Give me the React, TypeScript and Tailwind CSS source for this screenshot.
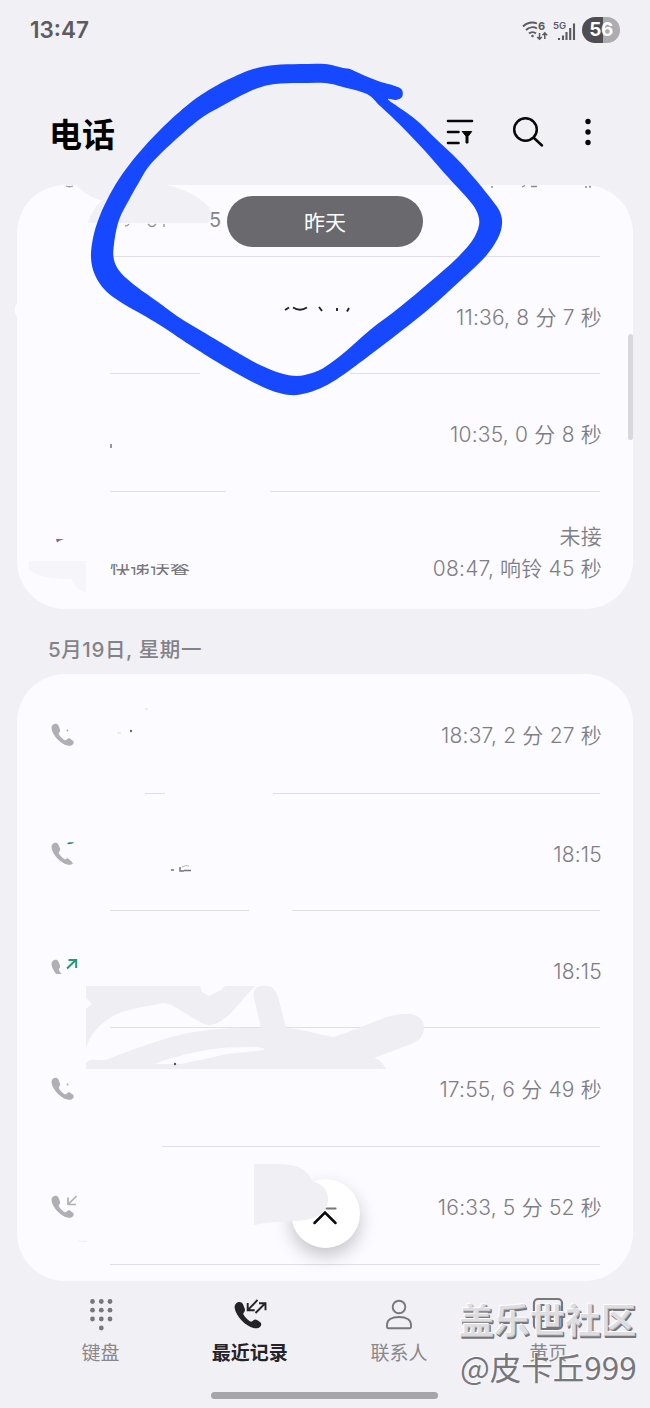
import type { ReactNode } from "react";

type Call = {
  lines: string[];
  height: string;
  segments: [number, number][];
  icon?: ReactNode;
};

type Point = [number, number];

const HANDSET =
  "M3.2 1.1C1.2 2 .2 3.7.6 6.1c.5 3 2.7 7 5.8 10.200 3 3.100 6.700 5.600 9.800 6.300 3 .6 5.400-.2 6.300-2.200.5-1.200.1-2.200-.8-2.900l-2.500-1.700c-1-.7-2.100-.6-3 .2l-1 .9c-.6.5-1.300.5-2 0-2.200-1.500-4-3.400-5.200-5.400-.4-.7-.3-1.300.2-1.900l.5-.7c.6-.9.6-1.800.1-2.800L7.400 2.600C6.600 1 4.900.4 3.200 1.100Z";

function CallIcon({ arrow, cut }: { arrow?: "in" | "out" | "trace" | "dot"; cut?: "low" | "tip" }) {
  return (
    <svg width="28" height="26" viewBox="0 0 28 26" fill="none">
      <path d={HANDSET} fill="#b0afb4" />
      {cut === "low" && <path d="M11 11v4H4v11h22V11Z" fill="#fcfbff" />}
      {cut === "tip" && <path d="m17.500 14 7 2v4.500l-3 .5c-1-2-3-3.500-5-4.500Z" fill="#fcfbff" />}
      {arrow === "in" && <path d="M25.500 1 17 9.500M17 2.500v7h8" stroke="#b0afb4" strokeWidth="1.700" />}
      {arrow === "out" && <path d="M16 9.500 25 .8M17.500 1H25.200v8" stroke="#259a77" strokeWidth="2" />}
      {arrow === "trace" && <path d="M16 1.500 18 .2h5l-1.500 1.300-4 .7Z" fill="#26866c" />}
      {arrow === "dot" && <circle cx="16.500" cy="7.500" r=".9" fill="#a5a4b2" />}
    </svg>
  );
}

const yesterday: Call[] = [
  { lines: [], height: "h-[72px]", segments: [[110, 600]] },
  { lines: ["11:36, 8 分 7 秒"], height: "h-[117px]", segments: [[110, 200], [350, 600]] },
  { lines: ["10:35, 0 分 8 秒"], height: "h-[118px]", segments: [[110, 226], [270, 600]] },
  { lines: ["未接", "08:47, 响铃 45 秒"], height: "h-[117px]", segments: [] },
];

const monday: Call[] = [
  { lines: ["18:37, 2 分 27 秒"], height: "h-[120px]", segments: [[145, 165], [273, 600]], icon: <CallIcon arrow="dot" /> },
  { lines: ["18:15"], height: "h-[117px]", segments: [[110, 249], [292, 600]], icon: <CallIcon arrow="trace" cut="tip" /> },
  { lines: ["18:15"], height: "h-[117px]", segments: [[110, 600]], icon: <CallIcon arrow="out" cut="low" /> },
  { lines: ["17:55, 6 分 49 秒"], height: "h-[119px]", segments: [[162, 600]], icon: <CallIcon arrow="dot" /> },
  { lines: ["16:33, 5 分 52 秒"], height: "h-[118px]", segments: [[110, 600]], icon: <CallIcon arrow="in" /> },
];

function CallRow({ call }: { call: Call }) {
  return (
    <div className={`relative flex items-center pr-[31px] pl-[34px] ${call.height}`}>
      <div className="w-7 pt-1">{call.icon}</div>
      <div className="ml-auto pt-[4px] text-right text-[21px] leading-8 font-[350] tracking-[0.2px] text-[#7f7e83]">
        {call.lines.map((line) => (
          <p key={line}>{line}</p>
        ))}
      </div>
      {call.segments.map(([from, to]) => (
        <span
          key={from}
          className="absolute bottom-0 h-px bg-[#e0dfe4]"
          style={{ left: from - 17, width: to - from }}
        />
      ))}
    </div>
  );
}

function StatusBar() {
  return (
    <div className="flex h-[60px] items-center justify-between px-[30px]">
      <span className="text-[22.500px] font-semibold text-[#5c5b60]">13:47</span>
      <div className="flex items-center">
        <svg width="56" height="24" viewBox="0 0 56 24" fill="none">
          <g stroke="#5b5a5f" strokeWidth="1.900">
            <path d="M1 8.500C4.500 4.500 10.500 3.500 15 5.500M4 12c3-3 7.500-3.500 11-1.500M7 15.500c2-1.800 5-1.800 7 0" />
            <path d="M17.500 15v6M15.200 19l2.300 2.300 2.300-2.300M22.800 21v-6M20.500 17.200l2.300-2.400 2.300 2.400" strokeWidth="1.500" />
          </g>
          <circle cx="10.500" cy="18" r="1.300" fill="#5b5a5f" />
          <text x="16" y="11.500" fontSize="11" fontWeight="700" fill="#5b5a5f">6</text>
          <text x="31" y="10.500" fontSize="9.500" fontWeight="600" fill="#5b5a5f">5G</text>
          <path d="M37 20v2M41 17.500V22M44.500 14v8M48.200 10v12M52 5.500V22" stroke="#5b5a5f" strokeWidth="2.100" />
        </svg>
        <div className="ml-[4px] flex h-[26px] w-[38px] items-center justify-center rounded-full bg-linear-to-r from-[#4e4d52] from-55% to-[#adacb1] to-55% text-[19px] font-bold tracking-[-0.5px] text-white">
          56
        </div>
      </div>
    </div>
  );
}

function Header() {
  return (
    <div className="flex h-[125px] items-start pt-[52px] pr-[55px] pl-[49px]">
      <h1 className="pt-[2px] text-[33px] leading-[42px] font-bold text-black">电话</h1>
      <div className="ml-auto flex items-center pt-[3px]">
        <svg width="30" height="32" viewBox="0 0 30 32" fill="none" stroke="#080808" strokeWidth="2.600" strokeLinecap="round">
          <path d="M3 5h24M3 16h10.500M3 27h10.500" />
          <path d="M17.500 15.500h9.200L23 20.500V27h-2v-6.500Z" fill="#080808" stroke="#080808" strokeWidth="1" strokeLinejoin="round" />
        </svg>
        <svg className="ml-[35px]" width="34" height="34" viewBox="0 0 34 34" fill="none" stroke="#080808" strokeWidth="2.500" strokeLinecap="round">
          <circle cx="15.500" cy="14.500" r="11.300" />
          <path d="m24 23 8 7.500" />
        </svg>
        <svg className="ml-[37px]" width="14" height="30" viewBox="0 0 14 30" fill="#080808">
          <circle cx="7" cy="4.500" r="2.700" />
          <circle cx="7" cy="15" r="2.700" />
          <circle cx="7" cy="25.500" r="2.700" />
        </svg>
      </div>
    </div>
  );
}

function KeypadIcon() {
  const dots: Point[] = [
    [6.5, 5.5], [15.3, 5.5], [24, 5.5],
    [6.5, 14.2], [15.3, 14.2], [24, 14.2],
    [6.5, 23], [15.3, 23], [24, 23],
    [15.3, 32],
  ];
  return (
    <svg width="30" height="36" viewBox="0 0 30 36" fill="#78777c">
      {dots.map(([x, y]) => (
        <circle key={`${x}-${y}`} cx={x} cy={y} r="2.400" />
      ))}
    </svg>
  );
}

function RecentsIcon() {
  return (
    <svg width="34" height="36" viewBox="0 0 34 36" fill="none">
      <g transform="translate(1 5) scale(1.200)">
        <path d={HANDSET} fill="#242328" />
      </g>
      <path d="M24.500 4 15 13.800M14.700 7v7.200h7M22.500 17 32 7.500M26 7.300h6.500v7" stroke="#242328" strokeWidth="1.900" />
    </svg>
  );
}

function ContactIcon() {
  return (
    <svg width="30" height="36" viewBox="0 0 30 36" fill="none" stroke="#78777c" strokeWidth="1.900">
      <circle cx="15" cy="11" r="6.300" />
      <path d="M3 31v-2c0-5 4.500-8 12-8s12 3 12 8v2c0 .8-.4 1.200-1.200 1.200H4.200C3.400 32.200 3 31.800 3 31Z" />
    </svg>
  );
}

function PagesIcon() {
  return (
    <svg width="32" height="36" viewBox="0 0 32 36" fill="none" stroke="#78777c" strokeWidth="2.200">
      <rect x="2" y="3" width="28" height="30" rx="4" />
      <path d="M8 9h10M22 9h3M9 25h14" />
    </svg>
  );
}

function BottomNav() {
  const tabs = [
    { label: "键盘", icon: <KeypadIcon /> },
    { label: "最近记录", icon: <RecentsIcon />, active: true },
    { label: "联系人", icon: <ContactIcon /> },
    { label: "黄页", icon: <PagesIcon /> },
  ];
  return (
    <nav className="grid h-[111px] grid-cols-4 pt-[15px] pr-[27px] pl-[26px]">
      {tabs.map((tab) => (
        <div key={tab.label} className="flex flex-col items-center">
          {tab.icon}
          <span
            className={
              tab.active
                ? "mt-[8px] text-[19px] leading-7 font-bold text-[#242328]"
                : "mt-[8px] text-[19px] leading-7 text-[#88878c]"
            }
          >
            {tab.label}
          </span>
        </div>
      ))}
    </nav>
  );
}

// Eraser strokes and the leftovers of the names below them
function Smudges() {
  return (
    <svg className="pointer-events-none absolute inset-0" width="650" height="1408" viewBox="0 0 650 1408" fill="none">
      <path d="M76 184c5 8 17 14 27 17-8 4-12 13-15 22h117c6 0 8-4 5-15-12-13-26-19-44-23Z" fill="#f1f0f5" />
      <path d="M66 186q3.500 1.500 7 0" stroke="#9a999e" strokeWidth="1.300" />
      <path d="M491 187h2M522 187l3-1.500M531 186.500h6M585 187h2M589 186.500l2 .5" stroke="#8b8a8f" strokeWidth="1.300" />
      <path d="M125 226q3 0 4-2M148 224q4 5 8 0M164 224v3" stroke="#98979c" strokeWidth="1.400" />
      <path d="M17 303c-3 4-3 10 0 14Z" fill="#fcfbff" />
      <path d="m285 310 4-2.500M293 307.500q7 4.500 14 0M319 307l3 4M337 308v3M347 311.500l2-3.500" stroke="#222126" strokeWidth="1.900" />
      <path d="M111 444v4" stroke="#77767b" strokeWidth="1.500" />
      <path d="M56 539h8l-4 1.500-3 2Z" fill="#a3606a" />
      <path d="M29 561h57v31c-6-1-11-5-15-13-17 0-35-2-42-10Z" fill="#f6f5fa" />
      <path d="M117 733h4M145 709h3" stroke="#dedde2" />
      <circle cx="131" cy="731" r="1.200" fill="#69686e" />
      <path d="M171 870h3M180 867v4h4M184 870.500h7" stroke="#77767b" strokeWidth="1.500" />
      <path d="M182 867q4-2.500 7-1" stroke="#b5b4b9" strokeWidth="1" />
      <path
        d="M86 986h114l2 6 7 4 12-6c2-2 3-4 6-4h28c-8 8-15 17-24 27-7 6-13 12-22 12-9-1-15-7-22-11-8-4-14-10-24-11-17 4-35 5-50 13-13 8-22 17-27 31v-38l6-5-6-6Z"
        fill="#efeef3"
      />
      <path
        fillRule="evenodd"
        d="M256 988c4-3 13-3 17 0 4 4 6 12 8 20l5 20c15 1 31 6 47 9 15-4 32-12 46-17 10-4 21-7 31-6 8 1 14 6 14 14s-5 13-13 16l-37 14c5 1 9 5 12 11H86v-6c3-3 5-4 10-3h9c30-11 66-26 103-30 18-2 35-2 53-2l-7-30c-1-4 0-7 2-10ZM154 1064h28l45-10 38-4c-2-3-10-3-20-3-32 0-60 6-91 17Z"
        fill="#efeef3"
      />
      <circle cx="175" cy="1064" r="1.200" fill="#55545a" />
      <path d="M78 1241q5 1 9 0" stroke="#f0eff4" />
    </svg>
  );
}

const penOuter: Point[] = [
  [107, 200], [119, 179], [137, 155], [162, 128], [190, 103], [214, 87], [240, 74], [257, 68], [275, 65],
  [300, 64], [325, 64], [343, 68], [350, 69], [361, 74], [378, 81], [395, 86], [402, 90], [402, 97], [396, 100],
  [388, 99], [394, 104], [415, 119], [436, 139], [458, 160], [475, 179], [492, 200], [500, 212], [502, 224],
  [498, 238], [485, 257], [460, 281], [430, 308], [400, 332], [370, 355], [343, 375], [325, 386], [307, 393],
  [290, 395], [270, 390], [245, 378], [217, 362], [190, 345], [155, 322], [122, 303], [105, 290], [95, 275],
  [91, 258], [93, 238], [99, 218],
];

const penInner: Point[] = [
  [129, 200], [138, 184], [150, 165], [173, 142], [200, 119], [220, 107], [242, 95], [258, 88], [275, 84],
  [300, 83], [325, 83], [343, 87], [367, 94], [379, 105], [392, 117], [408, 133], [425, 151], [447, 176],
  [468, 199], [477, 212], [479, 225], [472, 241], [455, 260], [430, 282], [400, 307], [370, 330], [345, 352],
  [325, 367], [312, 373], [297, 376], [280, 373], [260, 365], [240, 354], [215, 339], [180, 318], [158, 302],
  [137, 287], [121, 273], [114, 260], [114, 244], [119, 220],
];

// Closed Catmull-Rom curve through the points, as cubic segments
function closedCurve(points: Point[]) {
  const n = points.length;
  const at = (i: number) => points[(i + n) % n];
  const parts = points.map((p, i) => {
    const prev = at(i - 1);
    const next = at(i + 1);
    const after = at(i + 2);
    const c1 = [p[0] + (next[0] - prev[0]) / 6, p[1] + (next[1] - prev[1]) / 6];
    const c2 = [next[0] - (after[0] - p[0]) / 6, next[1] - (after[1] - p[1]) / 6];
    return `C${c1.join(" ")} ${c2.join(" ")} ${next.join(" ")}`;
  });
  return `M${points[0].join(" ")}${parts.join("")}Z`;
}

// Freehand pen circle around the floating date
function PenMark() {
  return (
    <svg className="pointer-events-none absolute inset-0" width="650" height="1408" viewBox="0 0 650 1408">
      <path fillRule="evenodd" fill="#1548ff" d={closedCurve(penOuter) + closedCurve(penInner)} />
    </svg>
  );
}

export default function App() {
  return (
    <div className="relative h-[1408px] w-[650px] overflow-hidden bg-[#f1f0f5] font-[Inter,'Noto_Sans_CJK_SC',sans-serif]">
      <StatusBar />
      <Header />

      <section className="relative mx-[17px] h-[424px] rounded-[48px] bg-[#fcfbff]">
        {yesterday.map((call, i) => (
          <CallRow key={i} call={call} />
        ))}
        <span className="absolute top-[23px] left-[192px] text-[20px] leading-6 text-[#858489]">5</span>
        {/* only a strip of the caller name is left */}
        <div className="absolute top-[379px] left-[93px] h-[11px] overflow-hidden">
          <p className="mt-[-8px] text-[20px] leading-7 text-[#77767b]">快递送餐</p>
        </div>
      </section>

      <h2 className="flex h-[65px] items-center pt-[18px] pl-[48px] text-[20.500px] font-medium tracking-[0.6px] text-[#838287]">
        5月19日, 星期一
      </h2>

      <section className="relative mx-[17px] h-[607px] rounded-[48px] bg-[#fcfbff]">
        {monday.map((call, i) => (
          <CallRow key={i} call={call} />
        ))}
      </section>

      <BottomNav />
      <div className="ml-[211px] h-[7px] w-[227px] rounded-full bg-[#a6a5aa]" />

      <Smudges />

      <div className="absolute top-[196px] left-[227px] flex h-[51px] w-[196px] items-center justify-center rounded-full bg-[#6a696e] pt-[2px] text-[21px] text-white">
        昨天
      </div>

      <div className="absolute top-[1179px] left-[291px] flex h-[69px] w-[69px] items-center justify-center rounded-full bg-white pt-[8px] pr-[2px] shadow-[0_8px_18px_rgba(0,0,0,0.22)]">
        <svg width="30" height="24" viewBox="0 0 30 24" fill="none" stroke="#0a0a0a" strokeWidth="2.500" strokeLinecap="round">
          <path d="M4.500 17 15 6.500 25.500 17" />
          <path d="M16.500 2.500h9" stroke="#77767b" strokeWidth="2.200" />
        </svg>
      </div>
      <svg className="absolute top-[1160px] left-[250px]" width="84" height="66" viewBox="0 0 84 66">
        <path d="M4 4h28c14 1 25 4 30 17 11 3 16 9 16 18 0 8-4 14-12 18-16 7-36 2-62 8Z" fill="#f0eff3" />
      </svg>

      <div className="absolute top-[334px] right-[17px] h-[106px] w-[5px] rounded-full bg-[#d9d8dd]" />

      <PenMark />

      <div className="absolute top-[1301px] left-[459px] whitespace-nowrap text-[#d6d5d9cc] [text-shadow:-1px_-1px_0_#fff,1px_1px_0_#77767b,1px_2px_0_#77767b]">
        <p className="text-[35.500px] leading-[42px] font-bold">盖乐世社区</p>
      </div>
      <div className="absolute top-[1347px] left-[460px] font-['Noto_Sans_CJK_SC',sans-serif] whitespace-nowrap text-[#77767b] [text-shadow:-1px_-1px_0_#fff]">
        <p className="text-[31.500px] leading-[38px]">@皮卡丘999</p>
      </div>
    </div>
  );
}
